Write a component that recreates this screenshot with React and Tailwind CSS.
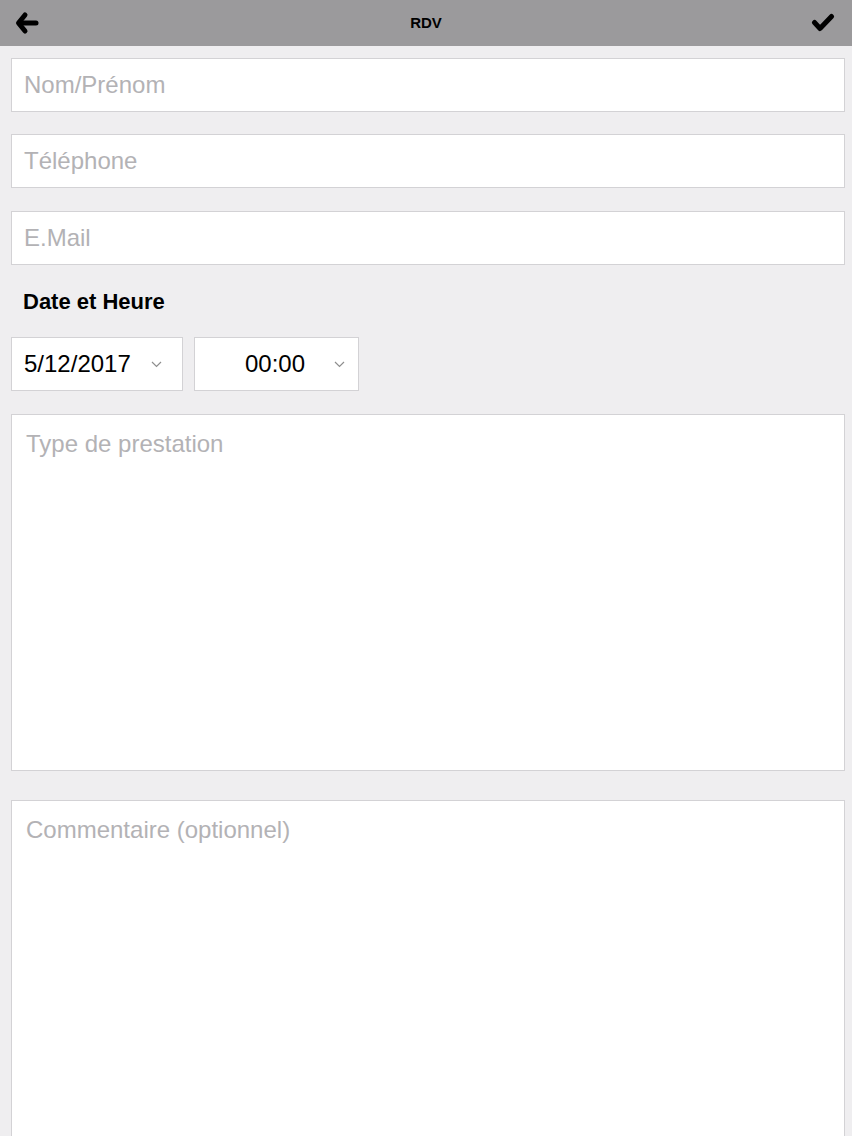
import React from "react";

const font = { fontFamily: '"Liberation Sans", Arial, sans-serif' };

function Field({ placeholder }) {
  return (
    <div className="h-[54px] bg-white border border-[#d3d2d5] flex items-center pl-[12px]">
      <span className="text-[24px] text-[#b3b2b5]">{placeholder}</span>
    </div>
  );
}

function Chevron() {
  return (
    <svg width="11" height="7" viewBox="0 0 11 7" fill="none">
      <path d="M1 1l4.5 4.5L10 1" stroke="#8e8e8e" strokeWidth="1.2" />
    </svg>
  );
}

function BackArrow() {
  return (
    <svg width="24" height="24" viewBox="0 0 24 24" fill="none">
      <path d="M10 4L3.5 12L10 20" stroke="#000" strokeWidth="5" strokeLinecap="round" strokeLinejoin="round" />
      <path d="M5 12H21" stroke="#000" strokeWidth="5" strokeLinecap="round" />
    </svg>
  );
}

function Check() {
  return (
    <svg width="24" height="20" viewBox="0 0 24 20" fill="none">
      <path d="M3.5 9.5L9 15.5L20.5 3.5" stroke="#000" strokeWidth="5" strokeLinecap="round" strokeLinejoin="round" />
    </svg>
  );
}

export default function App() {
  return (
    <div className="w-[852px] h-[1136px] overflow-hidden bg-[#efeef0] flex flex-col" style={font}>
      <div className="h-[46px] bg-[#9b9a9c] flex items-center justify-between pl-[15px] pr-[17px] shrink-0 relative">
        <BackArrow />
        <span className="absolute left-1/2 -translate-x-1/2 top-[12px] text-[15px] font-bold text-black">RDV</span>
        <Check />
      </div>
      <div className="flex flex-col pl-[11px] pr-[7px] pt-[12px]">
        <Field placeholder="Nom/Prénom" />
        <div className="h-[22px]" />
        <Field placeholder="Téléphone" />
        <div className="h-[23px]" />
        <Field placeholder="E.Mail" />
        <div className="h-[72px] flex items-center pl-[12px]">
          <span className="text-[22px] font-bold text-black">Date et Heure</span>
        </div>
        <div className="flex gap-[11px]">
          <div className="w-[172px] h-[54px] bg-white border border-[#d3d2d5] flex items-center pl-[12px] pr-[20px] justify-between">
            <span className="text-[24px] text-black">5/12/2017</span>
            <Chevron />
          </div>
          <div className="w-[165px] h-[54px] bg-white border border-[#d3d2d5] flex items-center pl-[50px] pr-[13px] justify-between">
            <span className="text-[24px] text-black">00:00</span>
            <Chevron />
          </div>
        </div>
        <div className="h-[23px]" />
        <div className="h-[357px] bg-white border border-[#d3d2d5] pl-[14px] pt-[11px]">
          <span className="text-[24px] text-[#b3b2b5]">Type de prestation</span>
        </div>
        <div className="h-[29px]" />
        <div className="h-[400px] bg-white border border-[#d3d2d5] pl-[14px] pt-[11px]">
          <span className="text-[24px] text-[#b3b2b5]">Commentaire (optionnel)</span>
        </div>
      </div>
    </div>
  );
}
